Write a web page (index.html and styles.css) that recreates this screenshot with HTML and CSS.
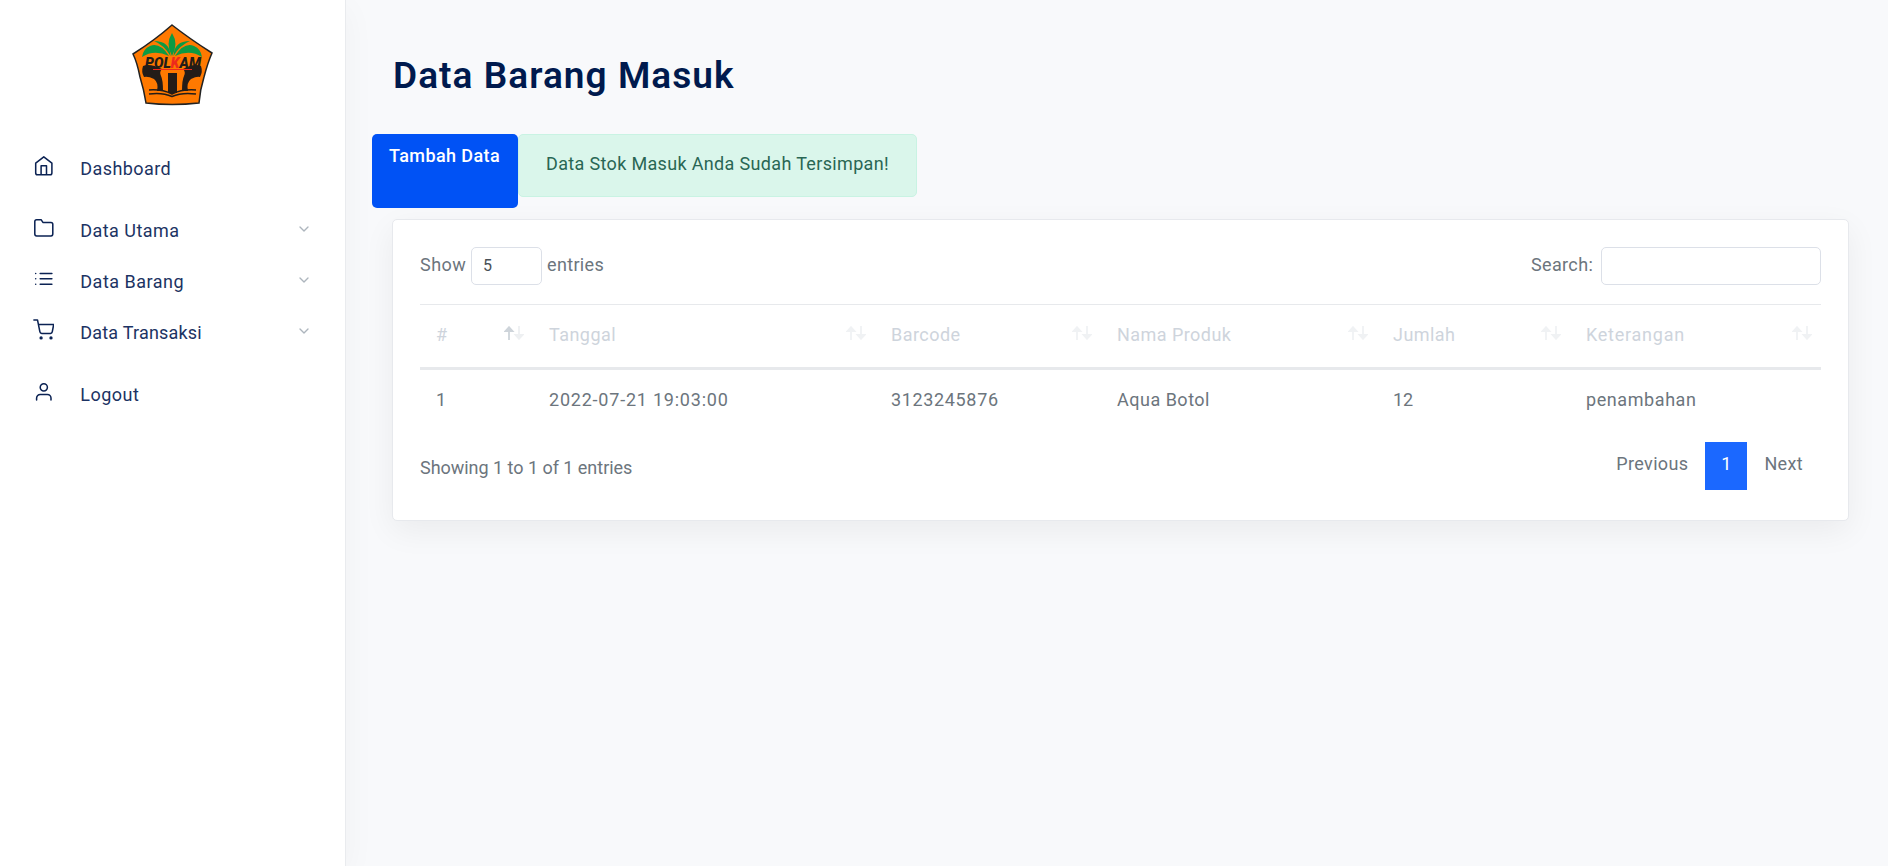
FILE: index.html
```html
<!DOCTYPE html>
<html lang="id">
<head>
<meta charset="utf-8">
<title>Data Barang Masuk</title>
<link rel="stylesheet" href="styles.css">
</head>
<body>
<aside class="sidebar">
  <div class="brand">
    <svg class="logo" viewBox="0 0 104 100">
      <path d="M52 10Q70 24 92 38Q88 47 84 62Q80 75 79 88Q52 91 26 88Q24 75 20 62Q17 47 13 39Q35 25 52 10Z" fill="#ff7900" stroke="#222" stroke-width="1.500"/>
      <g fill="#0d9a43">
        <path d="M52 41Q45 29 52 18Q59 29 52 41Z"/>
        <path d="M50.500 41Q50 26 34 26Q44 30 50.500 41Z"/><path d="M53.500 41Q54 26 70 26Q60 30 53.500 41Z"/>
        <path d="M49 41Q40 27 30 31Q23 34 22 42Q34 34 49 41Z"/><path d="M55 41Q64 27 74 31Q81 34 82 42Q70 34 55 41Z"/>
      </g>
      <g fill="#231c18">
        <path d="M23 51Q30 48 42 54Q39 57 41 61Q43 65 43 76H37Q39 68 34 64Q28 61 24 62Q21 57 23 51Z"/>
        <path d="M81 51Q74 48 63 54Q66 57 64 61Q62 65 62 76H68Q66 68 71 64Q77 61 80 62Q83 57 81 51Z"/>
        <path d="M48 58H57V78H48Z"/>
      </g>
      <path d="M29 75Q42 74 52 79Q62 74 76 75M29 79Q42 77 52 81.500Q62 77 76 79" fill="none" stroke="#231c18" stroke-width="1.500"/>
      <path d="M33 54.500H72" stroke="#ed2a1c" stroke-width="1"/>
      <text class="logo-text" x="25" y="53" textLength="56" lengthAdjust="spacingAndGlyphs">POL<tspan fill="#ed2a1c">K</tspan>AM</text>
    </svg>
  </div>
  <nav class="menu">
    <a class="item solo"><svg class="ico" viewBox="0 0 24 24"><path d="M3 9l9-7 9 7v11a2 2 0 0 1-2 2H5a2 2 0 0 1-2-2zM9 22V12h6v10"/></svg><span class="m1">Dashboard</span></a>
    <a class="item"><svg class="ico" viewBox="0 0 24 24"><path d="M22 19a2 2 0 0 1-2 2H4a2 2 0 0 1-2-2V5a2 2 0 0 1 2-2h5l2 3h9a2 2 0 0 1 2 2z"/></svg><span class="m2">Data Utama</span><svg class="chev" viewBox="0 0 24 24"><path d="M6 9l6 6 6-6"/></svg></a>
    <a class="item"><svg class="ico" viewBox="0 0 24 24"><path d="M8 6h13M8 12h13M8 18h13M3 6h.01M3 12h.01M3 18h.01"/></svg><span class="m3">Data Barang</span><svg class="chev" viewBox="0 0 24 24"><path d="M6 9l6 6 6-6"/></svg></a>
    <a class="item"><svg class="ico" viewBox="0 0 24 24"><circle cx="9" cy="21" r="1"/><circle cx="20" cy="21" r="1"/><path d="M1 1h4l2.68 13.39a2 2 0 0 0 2 1.61h9.72a2 2 0 0 0 2-1.61L23 6H6"/></svg><span class="m4">Data Transaksi</span><svg class="chev" viewBox="0 0 24 24"><path d="M6 9l6 6 6-6"/></svg></a>
    <a class="item solo"><svg class="ico" viewBox="0 0 24 24"><path d="M20 21v-2a4 4 0 0 0-4-4H8a4 4 0 0 0-4 4v2"/><circle cx="12" cy="7" r="4"/></svg><span class="m5">Logout</span></a>
  </nav>
</aside>
<main class="main">
  <h1 class="title"><span>Data Barang Masuk</span></h1>
  <div class="actions">
    <button class="btn"><span>Tambah Data</span></button>
    <div class="alert"><span>Data Stok Masuk Anda Sudah Tersimpan!</span></div>
  </div>
  <section class="card">
    <div class="controls">
      <label class="length"><span class="c1">Show</span><span class="select">5</span><span class="c2">entries</span></label>
      <label class="search"><span class="c3">Search:</span><input class="input" type="text"></label>
    </div>
    <table class="table">
      <colgroup><col class="w1"><col class="w2"><col class="w3"><col class="w4"><col class="w5"><col class="w6"></colgroup>
      <thead><tr>
        <th><div class="th"><span>#</span><svg class="sort asc" viewBox="0 0 20 14"><path d="M5 14V3M1.5 5L5 1.2 8.5 5z"/><path class="down" d="M15 0v11M11.500 9L15 12.800 18.500 9z"/></svg></div></th>
        <th><div class="th"><span class="h2">Tanggal</span><svg class="sort" viewBox="0 0 20 14"><path d="M5 14V3M1.5 5L5 1.2 8.5 5z"/><path d="M15 0v11M11.500 9L15 12.800 18.500 9z"/></svg></div></th>
        <th><div class="th"><span class="h3">Barcode</span><svg class="sort" viewBox="0 0 20 14"><path d="M5 14V3M1.5 5L5 1.2 8.5 5z"/><path d="M15 0v11M11.500 9L15 12.800 18.500 9z"/></svg></div></th>
        <th><div class="th"><span class="h4">Nama Produk</span><svg class="sort" viewBox="0 0 20 14"><path d="M5 14V3M1.5 5L5 1.2 8.5 5z"/><path d="M15 0v11M11.500 9L15 12.800 18.500 9z"/></svg></div></th>
        <th><div class="th"><span class="h5">Jumlah</span><svg class="sort" viewBox="0 0 20 14"><path d="M5 14V3M1.5 5L5 1.2 8.5 5z"/><path d="M15 0v11M11.500 9L15 12.800 18.500 9z"/></svg></div></th>
        <th><div class="th"><span class="h6">Keterangan</span><svg class="sort" viewBox="0 0 20 14"><path d="M5 14V3M1.5 5L5 1.2 8.5 5z"/><path d="M15 0v11M11.500 9L15 12.800 18.500 9z"/></svg></div></th>
      </tr></thead>
      <tbody><tr>
        <td>1</td><td><span class="d2">2022-07-21 19:03:00</span></td><td><span class="d3">3123245876</span></td><td><span class="d4">Aqua Botol</span></td><td>12</td><td><span class="d6">penambahan</span></td>
      </tr></tbody>
    </table>
    <div class="foot">
      <div class="info">Showing 1 to 1 of 1 entries</div>
      <div class="pages"><a class="page"><span class="p1">Previous</span></a><a class="page active">1</a><a class="page"><span class="p2">Next</span></a></div>
    </div>
  </section>
</main>
</body>
</html>
```
FILE: styles.css
```css
* { box-sizing: border-box; }
body {
  margin: 0;
  height: 866px;
  display: flex;
  overflow: hidden;
  background: #f8f9fb;
  color: #6c757d;
  font: 18px/28px Roboto, sans-serif;
}
.sidebar {
  width: 346px;
  height: 866px;
  flex: none;
  background: #fff;
  border-right: 1px solid #e9ebee;
  box-shadow: 0 8px 32px rgba(0, 0, 0, .04);
}
.brand { height: 115px; padding: 15px 0 0 120px; }
.logo { display: block; width: 104px; height: 100px; }
.logo-text { font: 900 italic 14px Roboto, sans-serif; fill: #231c18; }
.menu { padding-top: 25px; color: #0b2253; }
.item { display: flex; align-items: center; height: 51px; padding: 0 33px 0 32.700px; }
.solo { height: 73px; padding-bottom: 11px; padding-top: 11px; }
.solo:first-child { height: 62px; padding-top: 0; }
.item span { margin-left: 26px; flex: 1; white-space: nowrap; padding-top: 6px; color: #1c3363; }
.m1 { letter-spacing: .42px; }
.m2 { letter-spacing: .45px; }
.m3 { letter-spacing: .5px; }
.m4 { letter-spacing: .2px; }
.m5 { letter-spacing: .5px; }
.ico { width: 21.600px; height: 21.600px; flex: none; }
.ico, .chev { fill: none; stroke: currentColor; stroke-width: 1.7; stroke-linecap: round; stroke-linejoin: round; }
.chev { width: 16px; height: 16px; stroke-width: 2; color: #adb5bd; margin-top: 3px; }
.main { flex: 1; padding: 54px 39px 0 46px; }
.title { margin: 0 0 36px; padding-left: 1px; font-size: 37px; line-height: 44px; font-weight: 600; letter-spacing: 1.050px; color: #001a4e; white-space: nowrap; }
.actions { display: flex; height: 74px; margin-left: -20px; align-items: flex-start; white-space: nowrap; }
.btn { width: 146px; height: 74px; border: 0; border-radius: 5px; background: #0052f5; color: #fff; font: 500 18px/28px Roboto, sans-serif; letter-spacing: .4px; padding: 8px 0 0 17px; display: flex; text-align: left; }
.alert { width: 399px; height: 63px; border: 1px solid #c9f3e3; border-radius: 5px; background: #daf6eb; color: #296654; letter-spacing: .34px; padding: 15px 0 0 27px; }
.card { margin-top: 11px; height: 302px; background: #fff; border: 1px solid #e7e9ed; border-radius: 5px; padding: 27px; box-shadow: 0 10px 32px rgba(0, 0, 0, .06); }
.controls { display: flex; justify-content: space-between; height: 38px; }
.length, .search { display: flex; white-space: nowrap; letter-spacing: .35px; }
.length > span, .search > span { line-height: 36px; }
.select { width: 71px; height: 38px; margin: 0 5px; border: 1px solid #dce0e8; border-radius: 5px; padding-left: 11px; font-size: 16px; color: #495057; }
.c1 { width: 46px; letter-spacing: .5px; }
.c3 { width: 70px; }
.input { width: 220px; height: 38px; border: 1px solid #dce0e8; border-radius: 5px; background: #fff; }
.table { width: 1401px; margin-top: 19px; table-layout: fixed; border-collapse: separate; border-spacing: 0; }
.w1 { width: 113px; } .w2 { width: 342px; } .w3 { width: 226px; } .w4 { width: 276px; } .w5 { width: 193px; } .w6 { width: 251px; }
th { height: 66px; padding: 0 9px 2px 16px; border-top: 1px solid #e7e9ec; border-bottom: 3px solid #e7e9ec; font-weight: 400; color: #ced4dc; text-align: left; }
.th { display: flex; justify-content: space-between; align-items: center; letter-spacing: .45px; }
.h6 { letter-spacing: .75px; }
.sort { width: 20px; height: 14px; margin-bottom: 4px; fill: #f0f2f4; stroke: #f0f2f4; stroke-width: 1.800; }
.asc { fill: #ced4da; stroke: #ced4da; }
.asc .down { fill: #eef0f2; stroke: #eef0f2; }
td { height: 58px; padding: 2px 0 0 16px; white-space: nowrap; }
.d2 { letter-spacing: .78px; }
.d3 { letter-spacing: .65px; }
.d4 { letter-spacing: .5px; }
.d6 { letter-spacing: .58px; }
.foot { display: flex; justify-content: space-between; height: 62px; padding-top: 14px; }
.info { padding-top: 12px; letter-spacing: -.03px; }
.pages { display: flex; }
.page { height: 48px; padding: 8px 17px; letter-spacing: .35px; }
.page:last-child { padding-right: 18px; }
.active { width: 42px; padding: 8px 0; text-align: center; background: #1b68ff; color: #fff; }
```
